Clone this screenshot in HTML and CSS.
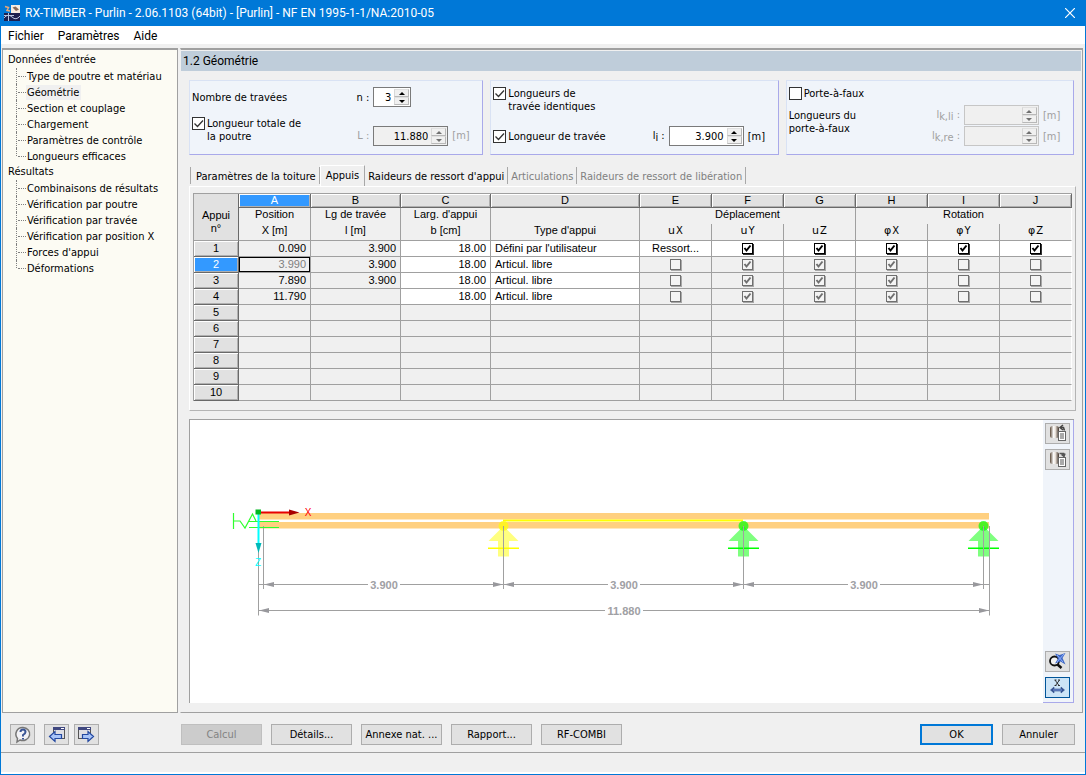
FILE: index.html
```html
<!DOCTYPE html>
<html lang="fr">
<head>
<meta charset="utf-8">
<title>RX-TIMBER - Purlin</title>
<link rel="stylesheet" href="styles.css">
</head>
<body>
<div class="window">
  <header class="titlebar">
    <svg class="app-icon" width="16" height="16" viewBox="0 0 16 16" aria-hidden="true">
      <path d="M7 0h9v8H7z" fill="#f6ece2"/>
      <path d="M1 1.500l3.500 1-1.500 3 3 .5" stroke="#e8a878" stroke-width="1.500" fill="none"/>
      <path d="M8.500 2.500l3-1 3.500 3-3 1.500z" fill="#8a6a58"/>
      <rect y="8" width="16" height="8" fill="#1c2050"/><path d="M0 13q4-5 8-1t8-1M4.500 8v8M0 10.500h10" stroke="#b8c4e0" fill="none"/>
    </svg>
    <h1 class="title">RX-TIMBER - Purlin - 2.06.1103 (64bit) - [Purlin] - NF EN 1995-1-1/NA:2010-05</h1>
    <button class="close" aria-label="Fermer"><svg width="10" height="10" viewBox="0 0 10 10"><path d="M0 0l10 10M10 0L0 10" stroke="#fff" stroke-width="1.2"/></svg></button>
  </header>
  <nav class="menubar">
    <button>Fichier</button><button>Paramètres</button><button>Aide</button>
  </nav>

  <div class="workspace">
    <nav class="tree">
      <h2>Données d'entrée</h2>
      <ul>
        <li><a href="#">Type de poutre et matériau</a></li>
        <li><a href="#" class="current">Géométrie</a></li>
        <li><a href="#">Section et couplage</a></li>
        <li><a href="#">Chargement</a></li>
        <li><a href="#">Paramètres de contrôle</a></li>
        <li><a href="#">Longueurs efficaces</a></li>
      </ul>
      <h2>Résultats</h2>
      <ul>
        <li><a href="#">Combinaisons de résultats</a></li>
        <li><a href="#">Vérification par poutre</a></li>
        <li><a href="#">Vérification par travée</a></li>
        <li><a href="#">Vérification par position X</a></li>
        <li><a href="#">Forces d'appui</a></li>
        <li><a href="#">Déformations</a></li>
      </ul>
    </nav>

    <main class="panel">
      <h2 class="panel-title">1.2 Géométrie</h2>
      <div class="content">
        <div class="groups">
          <section class="group">
            <div class="row">
              <label for="n">Nombre de travées</label><span class="sym">n :</span>
              <span class="spin short"><input id="n" value="3"><span class="arrows"><button aria-label="Plus"></button><button aria-label="Moins"></button></span></span><span></span>
            </div>
            <div class="row low">
              <label class="check top"><input type="checkbox" checked><span>Longueur totale de<br>la poutre</span></label><span class="sym dim">L :</span>
              <span class="spin off"><input aria-label="L" value="11.880" readonly><span class="arrows"><button aria-label="Plus" disabled></button><button aria-label="Moins" disabled></button></span></span><span class="unit dim">[m]</span>
            </div>
          </section>
          <section class="group">
            <div class="row">
              <label class="check"><input type="checkbox" checked><span>Longueurs de<br>travée identiques</span></label>
            </div>
            <div class="row">
              <label class="check mid"><input type="checkbox" checked><span>Longueur de travée</span></label><span class="sym">l<small>i</small> :</span>
              <span class="spin"><input aria-label="li" value="3.900"><span class="arrows"><button aria-label="Plus"></button><button aria-label="Moins"></button></span></span><span class="unit">[m]</span>
            </div>
          </section>
          <section class="group">
            <div class="row">
              <label class="check"><input type="checkbox"><span>Porte-à-faux</span></label>
            </div>
            <div class="row pair">
              <span class="two">Longueurs du<br>porte-à-faux</span><span class="sym dim">l<small>k,li</small> :</span>
              <span class="spin off pale"><input aria-label="lk,li" disabled><span class="arrows"><button aria-label="Plus" disabled></button><button aria-label="Moins" disabled></button></span></span><span class="unit dim">[m]</span>
              <span class="sym dim">l<small>k,re</small> :</span>
              <span class="spin off pale"><input aria-label="lk,re" disabled><span class="arrows"><button aria-label="Plus" disabled></button><button aria-label="Moins" disabled></button></span></span><span class="unit dim">[m]</span>
            </div>
          </section>
        </div>

        <div class="tabs" role="tablist">
          <button role="tab">Paramètres de la toiture</button><button role="tab" class="active" aria-selected="true">Appuis</button><button role="tab">Raideurs de ressort d'appui</button><button role="tab" disabled>Articulations</button><button role="tab" disabled>Raideurs de ressort de libération</button>
        </div>
        <div class="tab-page">
          <table class="grid">
            <colgroup><col class="c-no"><col class="c-s"><col class="c-m"><col class="c-m"><col><col class="c-s"><col class="c-s"><col class="c-s"><col class="c-s"><col class="c-s"><col class="c-s"></colgroup>
            <thead>
              <tr class="letters"><th rowspan="3" class="corner">Appui<br>n°</th><th class="sel">A</th><th>B</th><th>C</th><th>D</th><th>E</th><th>F</th><th>G</th><th>H</th><th>I</th><th>J</th></tr>
              <tr class="h1"><th>Position</th><th>Lg de travée</th><th>Larg. d'appui</th><th></th><th colspan="3">Déplacement</th><th colspan="3">Rotation</th></tr>
              <tr class="h2"><th>X [m]</th><th>l [m]</th><th>b [cm]</th><th>Type d'appui</th><th class="var">u<small>X</small></th><th class="var">u<small>Y</small></th><th class="var">u<small>Z</small></th><th class="var">φ<small>X</small></th><th class="var">φ<small>Y</small></th><th class="var">φ<small>Z</small></th></tr>
            </thead>
            <tbody>
              <tr><th>1</th><td class="num">0.090</td><td class="num">3.900</td><td class="num w">18.00</td><td class="w">Défini par l'utilisateur</td><td class="w mid">Ressort...</td><td class="w mid"><input type="checkbox" aria-label="uY" checked></td><td class="w mid"><input type="checkbox" aria-label="uZ" checked></td><td class="w mid"><input type="checkbox" aria-label="φX" checked></td><td class="w mid"><input type="checkbox" aria-label="φY" checked></td><td class="w mid"><input type="checkbox" aria-label="φZ" checked></td></tr>
              <tr><th class="sel">2</th><td class="num focus">3.990</td><td class="num">3.900</td><td class="num w">18.00</td><td class="w">Articul. libre</td><td class="mid"><input type="checkbox" aria-label="uX" disabled></td><td class="mid"><input type="checkbox" aria-label="uY" checked disabled></td><td class="mid"><input type="checkbox" aria-label="uZ" checked disabled></td><td class="mid"><input type="checkbox" aria-label="φX" checked disabled></td><td class="mid"><input type="checkbox" aria-label="φY" disabled></td><td class="mid"><input type="checkbox" aria-label="φZ" disabled></td></tr>
              <tr><th>3</th><td class="num">7.890</td><td class="num">3.900</td><td class="num w">18.00</td><td class="w">Articul. libre</td><td class="mid"><input type="checkbox" aria-label="uX" disabled></td><td class="mid"><input type="checkbox" aria-label="uY" checked disabled></td><td class="mid"><input type="checkbox" aria-label="uZ" checked disabled></td><td class="mid"><input type="checkbox" aria-label="φX" checked disabled></td><td class="mid"><input type="checkbox" aria-label="φY" disabled></td><td class="mid"><input type="checkbox" aria-label="φZ" disabled></td></tr>
              <tr><th>4</th><td class="num">11.790</td><td></td><td class="num w">18.00</td><td class="w">Articul. libre</td><td class="mid"><input type="checkbox" aria-label="uX" disabled></td><td class="mid"><input type="checkbox" aria-label="uY" checked disabled></td><td class="mid"><input type="checkbox" aria-label="uZ" checked disabled></td><td class="mid"><input type="checkbox" aria-label="φX" checked disabled></td><td class="mid"><input type="checkbox" aria-label="φY" disabled></td><td class="mid"><input type="checkbox" aria-label="φZ" disabled></td></tr>
              <tr><th>5</th><td></td><td></td><td></td><td></td><td></td><td></td><td></td><td></td><td></td><td></td></tr>
              <tr><th>6</th><td></td><td></td><td></td><td></td><td></td><td></td><td></td><td></td><td></td><td></td></tr>
              <tr><th>7</th><td></td><td></td><td></td><td></td><td></td><td></td><td></td><td></td><td></td><td></td></tr>
              <tr><th>8</th><td></td><td></td><td></td><td></td><td></td><td></td><td></td><td></td><td></td><td></td></tr>
              <tr><th>9</th><td></td><td></td><td></td><td></td><td></td><td></td><td></td><td></td><td></td><td></td></tr>
              <tr><th>10</th><td></td><td></td><td></td><td></td><td></td><td></td><td></td><td></td><td></td><td></td></tr>
            </tbody>
          </table>
        </div>

        <div class="view">
          <svg class="drawing" viewBox="190 421 853 281" role="img" aria-label="Schéma de la panne">
            <defs>
              <linearGradient id="barrel"><stop offset="0" stop-color="#5a4838"/><stop offset=".4" stop-color="#fff"/><stop offset=".6" stop-color="#e8e0d8"/><stop offset="1" stop-color="#3c3028"/></linearGradient>
              <g id="support"><path d="M-15 15L0 0L15 15H5.500V30.500H-5.500V15Z" fill-opacity=".5"/><circle r="5" cy="0" fill-opacity=".7"/><path d="M-15.500 21.500h31v1.500h-31z"/></g>
              <path id="head" d="M0 0l10-2.500v5z"/>
            </defs>
            <path d="M258 513h731v6.500H258zM258 522h731v6.500H258z" fill="#ffd080"/>
            <path d="M503 520.500H743" stroke="#ff0" stroke-width="2"/>
            <use href="#support" x="503.500" y="526" fill="#ff0"/>
            <use href="#support" x="743.500" y="526" fill="#0f0"/>
            <use href="#support" x="983.500" y="526" fill="#0f0"/>
            <path d="M258.500 515V615.500M263.500 526V589M503.500 526V589M743.500 526V589M983.500 526V589M989.500 526V615.500M258 584.500H368M400 584.500H608M640 584.500H848M880 584.500H989M258 610.500H605M643 610.500H989" stroke="#a0a0a0" fill="none"/>
            <g fill="#98989c">
              <use href="#head" x="264" y="584.500"/><use href="#head" x="504" y="584.500"/><use href="#head" x="744" y="584.500"/><use href="#head" x="259" y="610.500"/>
              <use href="#head" transform="translate(503 584.500) scale(-1 1)"/><use href="#head" transform="translate(743 584.500) scale(-1 1)"/><use href="#head" transform="translate(983 584.500) scale(-1 1)"/><use href="#head" transform="translate(989 610.500) scale(-1 1)"/>
            </g>
            <g class="dims"><text x="384" y="589">3.900</text><text x="624" y="589">3.900</text><text x="864" y="589">3.900</text><text x="624" y="615">11.880</text></g>
            <path d="M233.500 513V529M233.500 521H240L245 528L252.500 514L256 521M249 521.500H279M249 527.500H279" stroke="#2eff2e" stroke-width="1.200" fill="none"/>
            <path d="M258 512.500H291" stroke="#e80000" stroke-width="2"/><path d="M289 509.500L299.500 512.500L289 515.500Z" fill="#a80000"/>
            <path d="M258.500 512V544" stroke="#0ff" stroke-width="2"/><path d="M255.500 543L258.500 553L261.500 543Z" fill="#00b8b8"/>
            <rect x="255.500" y="509.500" width="5.500" height="5" fill="#00b820"/>
            <text class="axis" x="308" y="516" fill="#f00">X</text><text class="axis" x="258" y="566" fill="#0ff">Z</text>
          </svg>
          <div class="side">
            <button class="icon" aria-label="Exporter"><svg width="21" height="19" viewBox="0 0 21 19"><rect x="3" y="2" width="9" height="12" rx="2.500" fill="url(#barrel)"/><rect x="11.500" y="7.500" width="7" height="9" fill="#fff" stroke="#666"/><path d="M13 10h4M13 12h4M13 14h4" stroke="#555"/><path d="M13 3.500h3.500l1 3M16 1L13 3.500l3 2.500" stroke="#444" stroke-width="1.500" fill="none"/></svg></button>
            <button class="icon" aria-label="Importer"><svg width="21" height="19" viewBox="0 0 21 19"><rect x="3" y="2" width="9" height="12" rx="2.500" fill="url(#barrel)"/><rect x="11.500" y="7.500" width="7" height="9" fill="#fff" stroke="#666"/><path d="M13 10h4M13 12h4M13 14h4" stroke="#555"/><path d="M12.500 3.500h4v3M14.500 4.500l2.500 2 1-3" stroke="#555" stroke-width="1.500" fill="none"/></svg></button>
            <button class="icon push" aria-label="Zoom"><svg width="21" height="19" viewBox="0 0 21 19"><circle cx="7.500" cy="9" r="4.500" fill="#f2f2f2" stroke="#111" stroke-width="1.800"/><path d="M10.500 12.500l4 3.500" stroke="#111" stroke-width="2.500"/><path d="M8 1.500l4.500 1.500L18.500 1 15.500 6l3 6.500-5-3L8 11.500l3-5z" fill="#3f68c4"/><path d="M10 3l6 7M17 2l-7 8" stroke="#8fb0ff"/></svg></button>
            <button class="icon on" aria-label="Cotation X" aria-pressed="true"><svg width="21" height="19" viewBox="0 0 21 19"><path d="M7.500 2h2M11 2h2M8 2l4 5.500M12.500 2L8.500 7.500M7.500 7.500h2M11 7.500h2" stroke="#222" stroke-width=".9"/><path d="M3.500 12l3.500-3v2h7V9l3.500 3-3.500 3v-2H7v2z" fill="#33508f" stroke="#33508f" stroke-width=".6"/><path d="M6 12h9" stroke="#7d9ae0"/></svg></button>
          </div>
        </div>
      </div>
    </main>
  </div>

  <footer class="actions">
    <div class="tools">
      <button class="icon help" aria-label="Aide"><svg width="21" height="19" viewBox="0 0 21 19"><path d="M11 2.500a7 6.500 0 1 1-3 12.500L5 17l.5-3.500A6.700 6.700 0 0 1 11 2.500z" fill="#f2f2f6" stroke="#777" stroke-width="1.500"/><path d="M8.500 7Q8.500 4.500 11 4.500T13.500 7Q13.500 8.500 11 10v1.500M11 13v1.500" stroke="#3a5595" stroke-width="2" fill="none"/></svg></button>
      <button class="icon" aria-label="Précédent"><svg width="21" height="19" viewBox="0 0 21 19"><rect x="7.500" y="2.500" width="11" height="11" fill="#dedee4" stroke="#555"/><path d="M7 2h12v3H7z" fill="#404880"/><path d="M15 3.500h3" stroke="#fff"/><path d="M3.500 11.500L9 6.500v3h6.500v4H9v3z" fill="#a8c4f8" stroke="#2348a0" stroke-width="1.200"/></svg></button>
      <button class="icon" aria-label="Suivant"><svg width="21" height="19" viewBox="0 0 21 19"><rect x="2.500" y="2.500" width="12" height="11" fill="#dedee4" stroke="#555"/><path d="M2 2h13v3H2z" fill="#404880"/><path d="M11 3.500h3" stroke="#fff"/><path d="M17.500 11.500L12 6.500v3H6.500v4H12v3z" fill="#a8c4f8" stroke="#2348a0" stroke-width="1.200"/></svg></button>
    </div>
    <div class="buttons">
      <button class="btn" disabled>Calcul</button><button class="btn">Détails...</button><button class="btn">Annexe nat. ...</button><button class="btn">Rapport...</button><button class="btn">RF-COMBI</button>
    </div>
    <div class="buttons end"><button class="btn ok">OK</button><button class="btn end-btn">Annuler</button></div>
  </footer>
  <div class="status"></div>
</div>
</body>
</html>
```
FILE: styles.css
```css
* { box-sizing: border-box; }
body { margin: 0; color: #000; font: 11px/13px "DejaVu Sans Condensed", "Noto Sans", sans-serif; }
button, input { font: inherit; color: inherit; margin: 0; padding: 0; border: 0; background: none; }
h1, h2 { margin: 0; font-weight: normal; font-size: inherit; }
ul { margin: 0; padding: 0; list-style: none; }
a { color: inherit; text-decoration: none; }
svg { display: block; }

.window { display: flex; flex-direction: column; min-height: 100vh; background: #f0f0f0; border: 1px solid #0078d7; border-top: 0; }
.titlebar { display: flex; align-items: center; height: 26px; padding: 0 10px 0 3px; background: #0078d7; color: #fff; }
.title { flex: 1; margin-left: 5px; font: 12px/16px Roboto, "Noto Sans", sans-serif; white-space: nowrap; }
.close { display: flex; }
.menubar { display: flex; gap: 14px; height: 18px; padding: 1px 0 0 7px; background: #fff; font: 12px/18px Roboto, "Noto Sans", sans-serif; }

.workspace { flex: 1; display: flex; gap: 2px; margin-top: 4px; padding: 0 2px 0 1px; }
.tree { flex: none; width: 176px; padding: 2px 0 0 5px; background: #fcfbf3; border: 1px solid #a0a0a0; border-top-width: 2px; }
.tree h2 { line-height: 16px; }
.tree ul { margin-left: 8px; }
.tree li { display: flex; align-items: center; height: 16px; }
.tree li::before { content: ""; align-self: stretch; width: 1px; border-left: 1px dotted #808080; }
.tree li:last-child::before { align-self: flex-start; height: 8px; }
.tree li::after { content: ""; order: 1; width: 8px; border-top: 1px dotted #808080; }
.tree a { order: 2; padding: 0 2px 0 1px; line-height: 15px; white-space: nowrap; }
.tree .current { background: #f0f0f0; }

.panel { flex: 1; min-width: 0; display: flex; flex-direction: column; border: 1px solid #a0a0a0; border-top-width: 2px; border-left-color: #f0f0f0; }
.panel-title { margin: 1px 1px 0 0; height: 20px; padding-left: 2px; background: #bfcdda; font: 12px/20px Roboto, "Noto Sans", sans-serif; }
.content { flex: 1; display: flex; flex-direction: column; padding: 9px 6px 9px 8px; }

.groups { display: grid; grid-template-columns: 294fr 288fr 288fr; gap: 7px; padding-right: 2px; }
.group { display: flex; flex-direction: column; justify-content: space-between; gap: 3px; min-height: 75px; padding: 6px 14px 8px 2px; background: #f0f4fa; border: 1px solid #d9e2f4; border-right-color: #a9a9ea; border-bottom-color: #a9a9ea; }
.row { display: grid; grid-template-columns: 1fr auto 75px 16px; column-gap: 4px; align-items: center; }
.row.low { align-items: end; min-height: 29px; }
.row.low .sym, .row.low .unit { line-height: 20px; }
.row .top { align-self: start; }
.pair { row-gap: 1px; }
.two { grid-row: span 2; align-self: start; padding-top: 4px; }
.sym, .unit { white-space: nowrap; }
.sym { justify-self: end; }
.sym small { display: inline-block; padding-top: 2px; font-size: 11px; line-height: 11px; vertical-align: -2px; }
.dim { color: #a0a0a0; }
.check { display: flex; gap: 2px; white-space: nowrap; }
.check.mid { align-items: center; }
.check input { appearance: none; flex: none; width: 13px; height: 13px; border: 1px solid #333; background: #fff; }
.check input:checked { background: #fff url("data:image/svg+xml,%3Csvg xmlns='http://www.w3.org/2000/svg' viewBox='0 0 11 11'%3E%3Cpath d='M1.500 5.500l3 3 5.500-6' fill='none' stroke='%23333' stroke-width='1.300'/%3E%3C/svg%3E"); }

.spin { display: flex; height: 20px; padding: 1px; background: #fff; border: 1px solid #7a7a7a; }
.spin.short { width: 38px; }
.spin input { flex: 1; width: 0; min-width: 0; padding-right: 3px; text-align: right; }
.spin.off { background: #f0f0f0; }
.spin.pale { border-color: #c6c6c6; }
.arrows { display: flex; flex-direction: column; width: 15px; }
.arrows button { flex: 1; display: flex; align-items: center; justify-content: center; background: #f0f0f0; border: 1px solid #b8b8b8; border-top-color: #e0e0e0; border-left-color: #d8d8d8; }
.arrows button::before { content: ""; border: 3px solid transparent; border-top: 0; border-bottom-color: #000; }
.arrows button:last-child::before { border: 3px solid transparent; border-bottom: 0; border-top-color: #000; }
.arrows button:disabled::before { border-bottom-color: #707070; }
.arrows button:disabled:last-child::before { border-top-color: #707070; }

.tabs { display: flex; align-items: flex-end; height: 22px; margin-top: 9px; padding-left: 1px; }
.tabs button { height: 17px; margin-bottom: 2px; padding: 2px 3px 0; line-height: 13px; border-right: 1px solid #a8a8a8; white-space: nowrap; }
.tabs button:first-child { padding-left: 5px; border-left: 1px solid #a8a8a8; }
.tabs .active { height: 21px; margin-bottom: 0; padding: 0 5px 1px; border-top: 1px solid #fff; border-left: 1px solid #fff; }
.tabs button:disabled { color: #808080; }
.tab-page { padding: 6px 3px 9px 3px; border: 1px solid #b4b4b4; border-top-color: #fff; border-left-color: #fff; }

.grid { width: 100%; table-layout: fixed; border-collapse: separate; border-spacing: 0; border: 1px solid #a0a0a0; border-width: 1px 0 0 1px; font: 11px/13px "Liberation Sans", Arial, sans-serif; }
.c-no { width: 45px; }
.c-s { width: 72px; }
.c-m { width: 90px; }
.grid th, .grid td { height: 16px; padding: 0 4px; font-weight: normal; border: 0 solid #a0a0a0; border-width: 0 1px 1px 0; white-space: nowrap; overflow: hidden; line-height: 13px; }
.grid thead th { vertical-align: top; }
.grid tr > :last-child { border-right-color: #fff; }
.grid .letters th { height: 14px; background: #e1e1e1; border-color: #696969; box-shadow: inset 1px 1px #fff, inset -1px -1px #b0b0b0; }
.grid .h1 th { border-bottom: 0; }
.grid .h1 th:nth-child(4) { border-right-color: #a0a0a0; }
.grid .h2 th { height: 17px; }
.grid .letters .corner { padding-top: 15px; border-bottom-color: #a0a0a0; box-shadow: none; }
.grid tbody th { background: #e1e1e1; border-color: #696969; box-shadow: inset 1px 1px #fff, inset -1px -1px #b0b0b0; }
.grid .sel, .grid .letters .sel, .grid tbody .sel { background: #3399ff; color: #fff; }
.grid .num { text-align: right; }
.grid .w { background: #fff; }
.grid .mid { text-align: center; }
.grid .focus { color: #808080; box-shadow: inset 0 0 0 1px #000; }
.var { font-family: "DejaVu Sans", sans-serif; }
.var small { margin-left: 1px; font-size: 10px; }
.grid input { appearance: none; display: block; width: 11px; height: 11px; margin: 0 auto; background: #fff; border: 1px solid #000; box-shadow: 1px 1px #333; }
.grid input:disabled { background-color: #f4f4f4; border-color: #707070; box-shadow: 1px 1px #a8a8a8; }
.grid input:checked { background-image: url("data:image/svg+xml,%3Csvg xmlns='http://www.w3.org/2000/svg' viewBox='0 0 9 9'%3E%3Cpath d='M1.500 4l2 2.500 4-5' fill='none' stroke='%23000' stroke-width='2'/%3E%3C/svg%3E"); }
.grid input:disabled:checked { background-image: url("data:image/svg+xml,%3Csvg xmlns='http://www.w3.org/2000/svg' viewBox='0 0 9 9'%3E%3Cpath d='M1.500 4l2 2.500 4-5' fill='none' stroke='%23707070' stroke-width='2'/%3E%3C/svg%3E"); }

.view { flex: 1; display: flex; margin: 8px 2px 0 0; background: #fff; border: 1px solid #a0a0a0; border-width: 1px 0 0 1px; }
.drawing { flex: 1; min-width: 0; min-height: 200px; }
.dims { font: bold 11px "Liberation Sans", Arial, sans-serif; fill: #a0a0a4; text-anchor: middle; }
.axis { font: 10px "Liberation Sans", Arial, sans-serif; text-anchor: middle; }
.side { display: flex; flex-direction: column; gap: 5px; width: 31px; padding: 3px 2px 4px; background: #f0f4fa; border: 1px solid #a9a9ea; border-width: 0 1px 1px 0; }
.icon { display: flex; align-items: center; justify-content: center; width: 25px; height: 21px; background: #e1e1e1; border: 1px solid #adadad; }
.push { margin-top: auto; }
.on { background: #cce4f7; border-color: #005499; }

.actions { display: flex; align-items: center; padding: 10px 10px 7px 9px; margin-top: 1px; }
.tools { display: flex; gap: 5px; width: 171px; }
.help { margin-right: 4px; }
.buttons { display: flex; gap: 9px; }
.end { margin-left: auto; }
.btn { width: 81px; height: 21px; background: #e1e1e1; border: 1px solid #adadad; white-space: nowrap; }
.btn:disabled { background: #cccccc; border-color: #bfbfbf; color: #838383; }
.ok { width: 73px; border: 2px solid #0078d7; }
.end-btn { width: 73px; }
.status { height: 22px; border-top: 1px solid #a0a0a0; border-bottom: 2px solid #fff; }
```
